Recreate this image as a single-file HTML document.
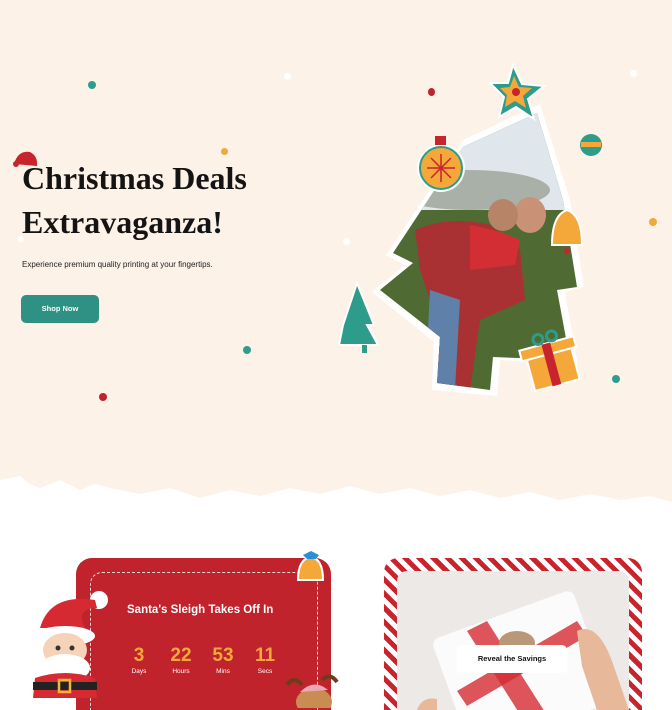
<!DOCTYPE html>
<html style="width:672px;height:710px;overflow:hidden"><head><meta charset="utf-8">
<style>
*{margin:0;padding:0;box-sizing:border-box}
html,body{width:672px;height:710px;overflow:hidden}
body{background:#fff;font-family:"Liberation Sans",sans-serif}
.wrap{position:relative;width:672px;height:710px;overflow:hidden}
.wrap svg{display:block}
.hero{position:absolute;left:0;top:0;width:672px;height:520px;background:#fcf2e8}
.dot{position:absolute;border-radius:50%}
h1{position:absolute;left:22px;top:156px;font-family:"Liberation Serif",serif;font-weight:bold;font-size:32px;line-height:44px;color:#141414}
.p{position:absolute;left:22px;top:260px;font-size:8px;color:#222}
.btn{position:absolute;left:21px;top:295px;width:78px;height:28px;border-radius:5px;background:#2e9184;color:#fff;font-size:7.5px;font-weight:bold;text-align:center;line-height:28px}
.red{position:absolute;left:76px;top:558px;width:255px;height:152px;border-radius:16px 16px 0 0;background:#c0232c}
.dash{position:absolute;left:90px;top:572px;width:228px;height:138px;border:1.5px dashed #f3d7d7;border-bottom:none;border-radius:12px 12px 0 0}
.t{position:absolute;color:#fff;font-weight:bold}
.num{position:absolute;top:645px;color:#f6a93b;font-weight:bold;font-size:19px;text-align:center;width:40px}
.lab{position:absolute;top:668px;color:#fff;font-size:6.5px;text-align:center;width:40px}
.stripe{position:absolute;left:384px;top:558px;width:258px;height:152px;border-radius:14px 14px 0 0;background:repeating-linear-gradient(45deg,#c8242d 0 5px,#fff 5px 10px)}
.inner{position:absolute;left:397px;top:571px;width:232px;height:139px;border-radius:10px 10px 0 0;background:#ece9e6;overflow:hidden}
</style></head><body><div class="wrap">
<div class="hero"></div>
<svg style="position:absolute;left:0;top:460px" width="672" height="60"><path d="M0 20 L20 16 L30 24 L40 28 L60 20 L80 30 L95 24 L110 28 L140 34 L170 28 L200 38 L230 30 L260 36 L290 28 L320 34 L350 26 L380 34 L410 28 L440 36 L470 30 L500 38 L530 32 L560 40 L590 34 L620 40 L650 36 L672 42 L672 60 L0 60Z" fill="#fff"/></svg>
<div class="dot" style="left:88px;top:81px;width:8px;height:8px;background:#2e9c8f"></div>
<div class="dot" style="left:284px;top:73px;width:7px;height:7px;background:#fff"></div>
<div class="dot" style="left:428px;top:88px;width:7px;height:8px;background:#c0232c"></div>
<div class="dot" style="left:630px;top:70px;width:7px;height:7px;background:#fff"></div>
<div class="dot" style="left:221px;top:148px;width:7px;height:7px;background:#f2a93b"></div>
<div class="dot" style="left:649px;top:218px;width:8px;height:8px;background:#f2a93b"></div>
<div class="dot" style="left:343px;top:238px;width:7px;height:7px;background:#fff"></div>
<div class="dot" style="left:243px;top:346px;width:8px;height:8px;background:#2e9c8f"></div>
<div class="dot" style="left:99px;top:393px;width:8px;height:8px;background:#c0232c"></div>
<div class="dot" style="left:612px;top:375px;width:8px;height:8px;background:#2e9c8f"></div>
<div class="dot" style="left:18px;top:236px;width:6px;height:6px;background:#fff"></div>
<h1>Christmas Deals<br>Extravaganza!</h1>
<svg style="position:absolute;left:12px;top:148px" width="28" height="22"><path d="M2 16 Q6 2 18 4 Q26 8 25 18 Z" fill="#c8242d"/><circle cx="4" cy="16" r="3" fill="#c8242d"/></svg>
<div class="p">Experience premium quality printing at your fingertips.</div>
<div class="btn">Shop Now</div>
<svg style="position:absolute;left:0;top:0" width="672" height="420">
<polygon points="463,140 540,104 570,200 584,287 565,292 578,365 500,360 497,396 432,390 434,342 372,292 405,265 386,255" fill="#fff"/>
<clipPath id="c"><polygon points="463,147 537,113 563,200 577,287 557,290 570,360 493,357 490,390 437,383 440,337 380,290 413,263 393,253"/></clipPath>
<g clip-path="url(#c)">
<rect x="370" y="100" width="220" height="300" fill="#4f6b33"/>
<rect x="370" y="100" width="220" height="110" fill="#dfe6ec"/>
<ellipse cx="470" cy="190" rx="80" ry="20" fill="#a9b0a8"/>
<path d="M415 230 Q450 215 490 225 L520 250 L525 300 L480 320 L470 390 L440 390 L430 300 L420 270Z" fill="#a93033"/>
<path d="M430 290 L460 300 L455 390 L425 385Z" fill="#5f80a8"/>
<ellipse cx="530" cy="215" rx="16" ry="18" fill="#c99276"/>
<ellipse cx="503" cy="215" rx="15" ry="16" fill="#b88468"/>
<path d="M470 225 Q500 230 520 240 L515 265 L470 270Z" fill="#d22e34"/>
</g>
<path d="M513 65 L522 84 L544 86 L528 99 L534 119 L516 107 L499 117 L504 97 L490 83 L508 83Z" fill="#2d9c8a" stroke="#fff" stroke-width="2"/>
<path d="M514 76 L519 87 L532 88 L523 96 L526 108 L515 101 L505 107 L507 95 L500 88 L510 87Z" fill="#f5a83a"/>
<circle cx="516" cy="92" r="4" fill="#c8242d"/>
<circle cx="441" cy="168" r="24" fill="#fff"/><circle cx="441" cy="168" r="21" fill="#f5a83a" stroke="#2d9c8a" stroke-width="2"/>
<rect x="435" y="136" width="11" height="9" fill="#c8242d"/>
<g stroke="#c8242d" stroke-width="1.5"><line x1="441" y1="154" x2="441" y2="182"/><line x1="427" y1="168" x2="455" y2="168"/><line x1="431" y1="158" x2="451" y2="178"/><line x1="451" y1="158" x2="431" y2="178"/></g>
<circle cx="591" cy="145" r="11" fill="#2d9c8a"/><rect x="581" y="142" width="20" height="5" fill="#f5a83a"/>
<path d="M552 245 Q552 215 567 210 Q582 215 582 245 Z" fill="#f5a83a" stroke="#fff" stroke-width="2"/>
<circle cx="567" cy="251" r="3" fill="#c8242d"/>
<path d="M343 325 L357 283 L374 325 L367 325 L378 345 L339 345 Z" fill="#2d9c8a" stroke="#fff" stroke-width="2"/>
<rect x="362" y="345" width="5" height="8" fill="#2d9c8a"/>
<g transform="rotate(-15 551 365)"><rect x="529" y="350" width="46" height="36" fill="#f5a83a" stroke="#fff" stroke-width="2"/><rect x="524" y="343" width="56" height="11" fill="#f5a83a" stroke="#fff" stroke-width="2"/><rect x="547" y="343" width="9" height="43" fill="#c8242d"/><circle cx="545" cy="337" r="5" fill="none" stroke="#2d9c8a" stroke-width="3"/><circle cx="559" cy="337" r="5" fill="none" stroke="#2d9c8a" stroke-width="3"/></g>
</svg>
<div class="red"></div>
<div class="dash"></div>
<div class="t" style="left:127px;top:604px;font-size:11.5px">Santa's Sleigh Takes Off In</div>
<div class="num" style="left:119px">3</div><div class="lab" style="left:119px">Days</div>
<div class="num" style="left:161px">22</div><div class="lab" style="left:161px">Hours</div>
<div class="num" style="left:203px">53</div><div class="lab" style="left:203px">Mins</div>
<div class="num" style="left:245px">11</div><div class="lab" style="left:245px">Secs</div>
<svg style="position:absolute;left:25px;top:588px" width="90" height="120">
<circle cx="74" cy="12" r="9" fill="#fff"/>
<path d="M15 40 Q25 5 70 12 L72 20 Q50 20 60 40Z" fill="#d62a33"/>
<ellipse cx="40" cy="48" rx="30" ry="10" fill="#fff"/>
<ellipse cx="40" cy="62" rx="22" ry="17" fill="#f6d2b8"/>
<ellipse cx="40" cy="80" rx="25" ry="14" fill="#fff"/>
<circle cx="33" cy="60" r="2.5" fill="#333"/><circle cx="47" cy="60" r="2.5" fill="#333"/>
<path d="M10 90 Q40 80 70 90 L72 110 L8 110Z" fill="#d62a33"/>
<rect x="8" y="94" width="64" height="8" fill="#222"/><rect x="34" y="92" width="11" height="12" fill="none" stroke="#f5b53a" stroke-width="2.5"/>
</svg>
<svg style="position:absolute;left:283px;top:545px" width="60" height="50"><path d="M15 35 Q15 14 28 12 Q40 14 40 35 Z" fill="#f5a83a" stroke="#fff" stroke-width="2"/><path d="M20 10 L28 6 L36 10 L33 14 L24 14Z" fill="#2a8fd8"/></svg>
<svg style="position:absolute;left:282px;top:670px" width="60" height="38"><path d="M5 15 Q12 5 20 15 M40 10 Q48 2 55 12" stroke="#6b3d1e" stroke-width="4" fill="none"/><ellipse cx="32" cy="32" rx="18" ry="14" fill="#c98d53"/><path d="M18 22 Q32 8 46 20" fill="#e8a8b8"/></svg>
<div class="stripe"></div>
<div class="inner">
<svg width="232" height="139">
<rect x="50" y="40" width="150" height="120" rx="8" fill="#fbfbfb" transform="rotate(-20 125 100)"/>
<path d="M70 60 L90 50 L160 160 L140 170Z" fill="#d62a33" opacity=".8"/>
<path d="M60 120 L180 50 L190 65 L70 135Z" fill="#d62a33" opacity=".8"/>
<ellipse cx="120" cy="72" rx="18" ry="12" fill="#b99877"/>
<path d="M180 60 Q200 50 215 90 L232 139 L200 139 Q190 110 185 95Z" fill="#e7b99a"/>
<path d="M20 139 Q25 125 40 128 L40 139Z" fill="#e7b99a"/>
</svg></div>
<div style="position:absolute;left:457px;top:645px;width:110px;height:28px;border-radius:5px;background:#fff;font-size:7.5px;font-weight:bold;text-align:center;line-height:28px;color:#111">Reveal the Savings</div>
</div></body></html>
